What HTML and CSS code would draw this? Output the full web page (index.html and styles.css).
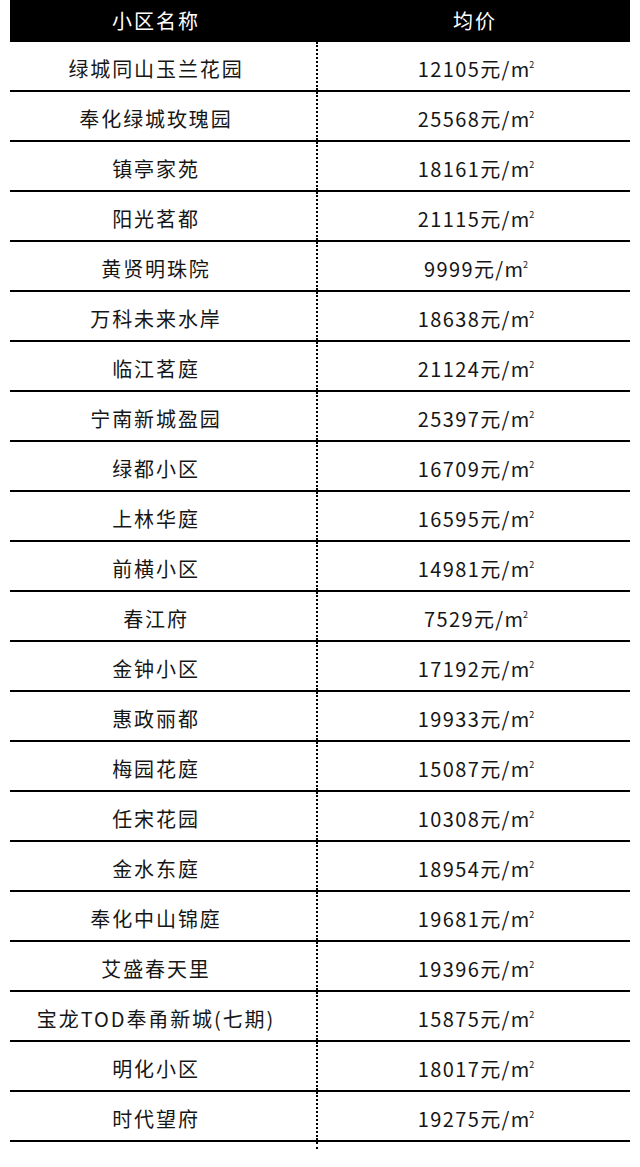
FILE: index.html
```html
<!DOCTYPE html>
<html lang="zh">
<head>
<meta charset="utf-8">
<link rel="stylesheet" href="styles.css">
</head>
<body>
<div class="table">
  <div class="head">
    <div class="hcell name">小区名称</div>
    <div class="hcell price">均价</div>
  </div>
  <div class="row"><div class="cell name">绿城同山玉兰花园</div><div class="cell price">12105元/m<span class="sq">2</span></div></div>
  <div class="row"><div class="cell name">奉化绿城玫瑰园</div><div class="cell price">25568元/m<span class="sq">2</span></div></div>
  <div class="row"><div class="cell name">镇亭家苑</div><div class="cell price">18161元/m<span class="sq">2</span></div></div>
  <div class="row"><div class="cell name">阳光茗都</div><div class="cell price">21115元/m<span class="sq">2</span></div></div>
  <div class="row"><div class="cell name">黄贤明珠院</div><div class="cell price">9999元/m<span class="sq">2</span></div></div>
  <div class="row"><div class="cell name">万科未来水岸</div><div class="cell price">18638元/m<span class="sq">2</span></div></div>
  <div class="row"><div class="cell name">临江茗庭</div><div class="cell price">21124元/m<span class="sq">2</span></div></div>
  <div class="row"><div class="cell name">宁南新城盈园</div><div class="cell price">25397元/m<span class="sq">2</span></div></div>
  <div class="row"><div class="cell name">绿都小区</div><div class="cell price">16709元/m<span class="sq">2</span></div></div>
  <div class="row"><div class="cell name">上林华庭</div><div class="cell price">16595元/m<span class="sq">2</span></div></div>
  <div class="row"><div class="cell name">前横小区</div><div class="cell price">14981元/m<span class="sq">2</span></div></div>
  <div class="row"><div class="cell name">春江府</div><div class="cell price">7529元/m<span class="sq">2</span></div></div>
  <div class="row"><div class="cell name">金钟小区</div><div class="cell price">17192元/m<span class="sq">2</span></div></div>
  <div class="row"><div class="cell name">惠政丽都</div><div class="cell price">19933元/m<span class="sq">2</span></div></div>
  <div class="row"><div class="cell name">梅园花庭</div><div class="cell price">15087元/m<span class="sq">2</span></div></div>
  <div class="row"><div class="cell name">任宋花园</div><div class="cell price">10308元/m<span class="sq">2</span></div></div>
  <div class="row"><div class="cell name">金水东庭</div><div class="cell price">18954元/m<span class="sq">2</span></div></div>
  <div class="row"><div class="cell name">奉化中山锦庭</div><div class="cell price">19681元/m<span class="sq">2</span></div></div>
  <div class="row"><div class="cell name">艾盛春天里</div><div class="cell price">19396元/m<span class="sq">2</span></div></div>
  <div class="row"><div class="cell name">宝龙TOD奉甬新城(七期)</div><div class="cell price">15875元/m<span class="sq">2</span></div></div>
  <div class="row"><div class="cell name">明化小区</div><div class="cell price">18017元/m<span class="sq">2</span></div></div>
  <div class="row"><div class="cell name">时代望府</div><div class="cell price">19275元/m<span class="sq">2</span></div></div>
  <div class="tail"></div>
</div>
</body>
</html>
```
FILE: styles.css
```css
html, body {
  margin: 0;
  padding: 0;
  background: #ffffff;
}
body {
  font-family: "Noto Sans CJK SC", "Noto Sans", sans-serif;
  color: #161616;
}
.table {
  width: 620px;
  margin: 0 10px;
}
.head {
  display: grid;
  grid-template-columns: 306px 314px;
  height: 42px;
  background: #000000;
  color: #ffffff;
}
.hcell {
  display: flex;
  align-items: center;
  justify-content: center;
  font-size: 20px;
  letter-spacing: 2px;
  line-height: 1;
}
.row {
  display: grid;
  grid-template-columns: 306px 314px;
  height: 50px;
  box-sizing: border-box;
  border-bottom: 2px solid #000000;
}
.cell {
  display: flex;
  align-items: center;
  justify-content: center;
  font-size: 20px;
  letter-spacing: 1.9px;
  line-height: 1;
  padding-top: 6px;
  box-sizing: border-box;
  white-space: nowrap;
}
.name {
  padding-right: 14px;
}
.price {
  border-left: 2px dotted #000000;
  padding-left: 4px;
  letter-spacing: 1.4px;
}
.hcell.price {
  border-left: none;
  letter-spacing: 2px;
}
.sq {
  font-size: 9px;
  align-self: flex-start;
  margin-top: 12px;
  margin-left: -1.4px;
  letter-spacing: 0;
}
.tail {
  height: 7px;
  margin-left: 306px;
  border-left: 2px dotted #000000;
}
```
